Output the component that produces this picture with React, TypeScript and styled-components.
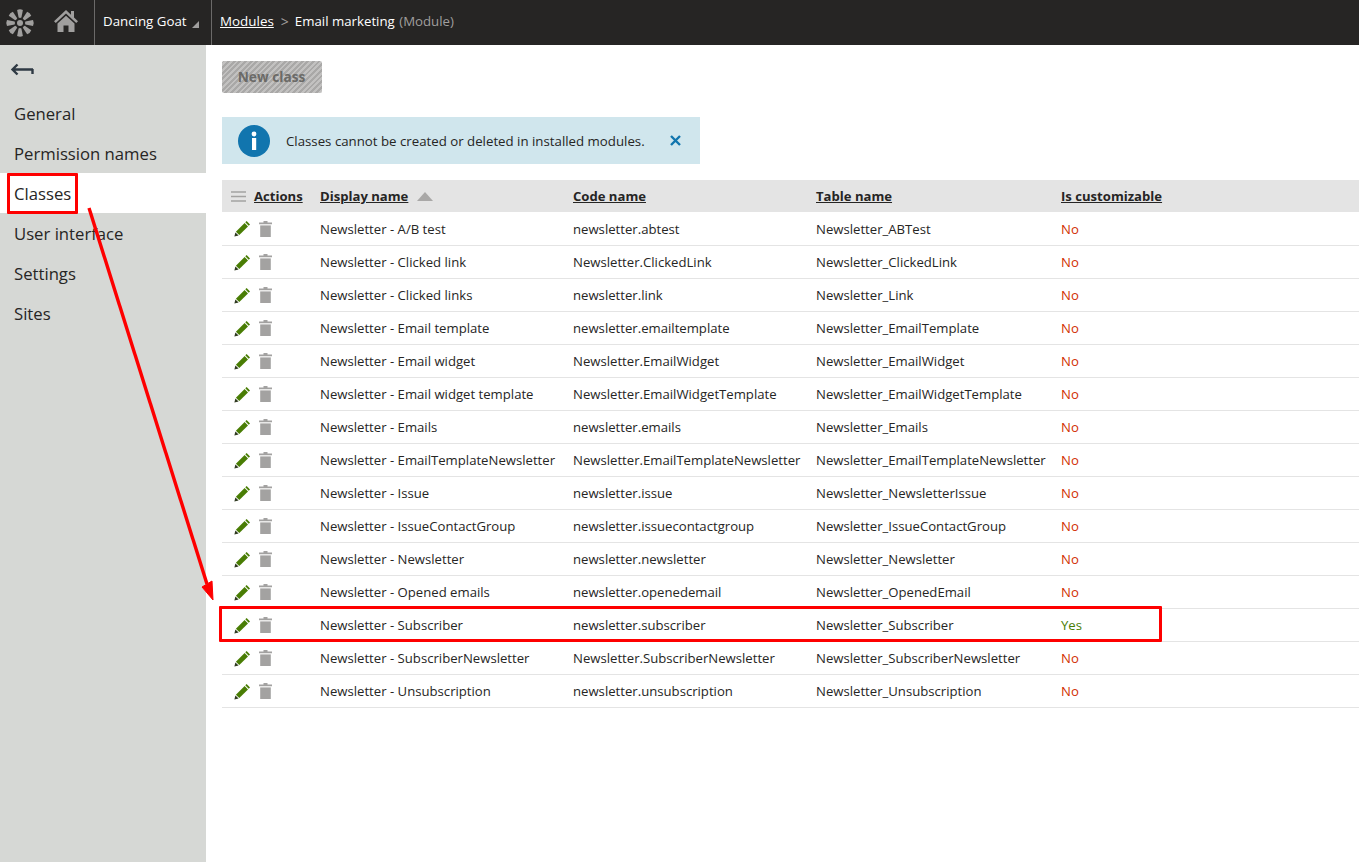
import React from "react";
import styled, { createGlobalStyle } from "styled-components";

const Global = createGlobalStyle`
  html, body { margin: 0; padding: 0; background: #fff; }
  body { font-family: "Open Sans", "Noto Sans", "Liberation Sans", sans-serif; color: #262524; overflow: hidden; }
`;
const Page = styled.div`position: relative; width: 1359px; height: 862px; overflow: hidden; display: flex; flex-direction: column;`;
const Header = styled.header`height: 45px; background: #262524; display: flex; align-items: stretch; flex: none; color: #fff;`;
const LogoCell = styled.div`width: 40px; display: flex; align-items: center; justify-content: center; padding-right: 1px; box-sizing: border-box;`;
const HomeCell = styled.div`width: 54px; display: flex; align-items: center; justify-content: center; padding-right: 3px; padding-bottom: 3px; box-sizing: border-box;`;
const SiteCell = styled.div`width: 118px; border-left: 1px solid #6b6a69; border-right: 1px solid #6b6a69; display: flex; align-items: center; padding: 0 0 3px 8px; box-sizing: border-box; font-size: 13.3px; gap: 5px;`;
const Caret = styled.span`width: 0; height: 0; border-style: solid; border-width: 0 0 7px 7px; border-color: transparent transparent #a09f9e transparent; margin-top: 7px;`;
const Crumbs = styled.div`display: flex; align-items: center; padding: 0 0 3px 8px; font-size: 13.4px; gap: 6px;`;
const CrumbLink = styled.a`color: #fff; text-decoration: underline;`;
const CrumbSep = styled.span`color: #a09f9e; font-size: 14px; margin-left: 1px;`;
const CrumbCurrent = styled.span`font-size: 13.25px;`;
const Muted = styled.span`color: #a09f9e; margin-left: 1px;`;
const Body = styled.div`flex: 1; display: flex; min-height: 0;`;
const Side = styled.nav`width: 206px; background: #d6d8d5; flex: none;`;
const Back = styled.div`height: 48px; padding: 15px 0 0 10px; box-sizing: border-box;`;
const MenuItem = styled.div<{ $active?: boolean }>`height: 40px; line-height: 42px; padding-left: 14px; font-size: 16.7px; color: #262524; background: ${(p) => (p.$active ? "#fff" : "transparent")};`;
const Main = styled.main`flex: 1; padding: 16px 0 0 16px; min-width: 0;`;
const DisabledButton = styled.div`width: 100px; height: 32px; border-radius: 2px; background: repeating-linear-gradient(135deg, #a9a8a7 0 2px, #c2c1c0 2px 4px); color: #6b6a67; font-size: 13.7px; font-weight: 700; display: flex; align-items: center; justify-content: center; box-sizing: border-box; padding: 0 1px 2px 0;`;
const Info = styled.div`margin-top: 24px; width: 478px; height: 47px; background: #d0e6ed; display: flex; align-items: center; padding-left: 16px; box-sizing: border-box; font-size: 13.25px; color: #262524;`;
const InfoText = styled.span`margin-left: 16px; width: 384px; white-space: nowrap; padding-top: 1px;`;
const Grid = styled.table`margin-top: 16px; width: 1137px; border-collapse: collapse; table-layout: fixed; font-size: 13.15px;`;
const HeadRow = styled.tr`background: #e4e4e4; height: 32px;`;
const Th = styled.th`text-align: left; padding: 0 0 0 8px; font-weight: 700; text-decoration: underline; font-size: 13.1px; white-space: nowrap; color: #262524;`;
const ActionsHead = styled.div`display: flex; align-items: center; gap: 8px; font-weight: 700; padding-left: 1px;`;
const SortArrow = styled.span`display: inline-block; width: 0; height: 0; border-style: solid; border-width: 0 8px 9px 8px; border-color: transparent transparent #a9a8a7 transparent; margin-left: 9px; vertical-align: 0;`;
const Row = styled.tr`height: 33px; border-bottom: 1px solid #e4e4e4;`;
const Td = styled.td`padding: 1px 0 0 8px; white-space: nowrap; box-sizing: border-box; color: #262524;`;
const Flag = styled.td<{ $yes: boolean }>`padding: 1px 0 0 8px; color: ${(p) => (p.$yes ? "#497d04" : "#d12f00")};`;
const Icons = styled.div`display: flex; align-items: center; gap: 8px; padding: 0 0 0 4px;`;
const Overlay = styled.div<{ $l: number; $t: number; $w: number; $h: number }>`position: absolute; left: ${(p) => p.$l}px; top: ${(p) => p.$t}px; width: ${(p) => p.$w}px; height: ${(p) => p.$h}px; border: 3px solid #fe0000; box-sizing: border-box; border-radius: 1px; pointer-events: none;`;
const Drawing = styled.svg`position: absolute; left: 0; top: 0; pointer-events: none;`;

const rows: [string, string, string, boolean?][] = [
  ["Newsletter - A/B test", "newsletter.abtest", "Newsletter_ABTest"],
  ["Newsletter - Clicked link", "Newsletter.ClickedLink", "Newsletter_ClickedLink"],
  ["Newsletter - Clicked links", "newsletter.link", "Newsletter_Link"],
  ["Newsletter - Email template", "newsletter.emailtemplate", "Newsletter_EmailTemplate"],
  ["Newsletter - Email widget", "Newsletter.EmailWidget", "Newsletter_EmailWidget"],
  ["Newsletter - Email widget template", "Newsletter.EmailWidgetTemplate", "Newsletter_EmailWidgetTemplate"],
  ["Newsletter - Emails", "newsletter.emails", "Newsletter_Emails"],
  ["Newsletter - EmailTemplateNewsletter", "Newsletter.EmailTemplateNewsletter", "Newsletter_EmailTemplateNewsletter"],
  ["Newsletter - Issue", "newsletter.issue", "Newsletter_NewsletterIssue"],
  ["Newsletter - IssueContactGroup", "newsletter.issuecontactgroup", "Newsletter_IssueContactGroup"],
  ["Newsletter - Newsletter", "newsletter.newsletter", "Newsletter_Newsletter"],
  ["Newsletter - Opened emails", "newsletter.openedemail", "Newsletter_OpenedEmail"],
  ["Newsletter - Subscriber", "newsletter.subscriber", "Newsletter_Subscriber", true],
  ["Newsletter - SubscriberNewsletter", "Newsletter.SubscriberNewsletter", "Newsletter_SubscriberNewsletter"],
  ["Newsletter - Unsubscription", "newsletter.unsubscription", "Newsletter_Unsubscription"],
];

const Logo = () => (
  <svg width="30" height="30" viewBox="0 0 30 30">
    <g fill="#a09f9e">
      <circle cx="15" cy="15" r="3" />
      {[0, 45, 90, 135, 180, 225, 270, 315].map((a) => (
        <path key={a} transform={`rotate(${a} 15 15)`} d="M13.6 9.6 L12.1 2 Q15 0.6 17.9 2 L16.4 9.6 Q15 10.4 13.6 9.6 Z" />
      ))}
    </g>
  </svg>
);
const Home = () => (
  <svg width="26" height="24" viewBox="0 0 26 24">
    <path fill="#a09f9e" d="M13 1 L1 12.2 L2.8 14 L13 4.6 L23.2 14 L25 12.2 L21 8.5 V2 H18 V5.7 Z" />
    <path fill="#a09f9e" d="M13 6.8 L4.5 14.6 V23 H10.5 V16.5 H15.5 V23 H21.5 V14.6 Z" />
  </svg>
);
const BackArrow = () => (
  <svg width="24" height="14" viewBox="0 0 24 14">
    <path fill="none" stroke="#2f3a44" strokeWidth="2.4" d="M23 6.5 H3 M7.5 1.5 L2.5 6.5 L7.5 11.5 M22.5 6 V11" />
  </svg>
);
const InfoIcon = () => (
  <svg width="32" height="32" viewBox="0 0 32 32">
    <circle cx="16" cy="16" r="16" fill="#1175ae" />
    <circle cx="16" cy="9" r="2.4" fill="#fff" />
    <rect x="14" y="13" width="4.2" height="12" fill="#fff" />
  </svg>
);
const CloseIcon = () => (
  <svg width="11" height="11" viewBox="0 0 11 11">
    <path d="M1 1 L10 10 M10 1 L1 10" stroke="#1175ae" strokeWidth="2.4" fill="none" />
  </svg>
);
const MenuIcon = () => (
  <svg width="15" height="11" viewBox="0 0 15 11">
    <path d="M0 1 H15 M0 5.5 H15 M0 10 H15" stroke="#a3a2a1" strokeWidth="1.6" />
  </svg>
);
const Pencil = () => (
  <svg width="17" height="17" viewBox="0 0 17 17">
    <path fill="#497d04" d="M12.6 1 L16 4.4 L14.7 5.7 L11.3 2.3 Z" />
    <path fill="#497d04" d="M10.6 3 L14 6.4 L5.3 15 L1.9 11.7 Z" />
    <path fill="#2f3a20" d="M1.4 12.4 L4.6 15.6 L0.4 16.6 Z" />
  </svg>
);
const Trash = () => (
  <svg width="13" height="16" viewBox="0 0 13 16">
    <path fill="#a3a2a1" d="M4.5 0 H8.5 V1.5 H13 V3.2 H0 V1.5 H4.5 Z" />
    <path fill="#a3a2a1" d="M1.2 4.4 H11.8 V16 H1.2 Z" />
  </svg>
);

export default function App() {
  return (
    <Page>
      <Global />
      <Header>
        <LogoCell><Logo /></LogoCell>
        <HomeCell><Home /></HomeCell>
        <SiteCell>Dancing Goat <Caret /></SiteCell>
        <Crumbs>
          <CrumbLink>Modules</CrumbLink>
          <CrumbSep>&gt;</CrumbSep>
          <CrumbCurrent>Email marketing <Muted>(Module)</Muted></CrumbCurrent>
        </Crumbs>
      </Header>
      <Body>
        <Side>
          <Back><BackArrow /></Back>
          <MenuItem>General</MenuItem>
          <MenuItem>Permission names</MenuItem>
          <MenuItem $active>Classes</MenuItem>
          <MenuItem>User interface</MenuItem>
          <MenuItem>Settings</MenuItem>
          <MenuItem>Sites</MenuItem>
        </Side>
        <Main>
          <DisabledButton>New class</DisabledButton>
          <Info>
            <InfoIcon />
            <InfoText>Classes cannot be created or deleted in installed modules.</InfoText>
            <CloseIcon />
          </Info>
          <Grid>
            <colgroup>
              <col width="90" />
              <col width="253" />
              <col width="243" />
              <col width="245" />
              <col />
            </colgroup>
            <thead>
              <HeadRow>
                <Th><ActionsHead><MenuIcon /><span>Actions</span></ActionsHead></Th>
                <Th>Display name<SortArrow /></Th>
                <Th>Code name</Th>
                <Th>Table name</Th>
                <Th>Is customizable</Th>
              </HeadRow>
            </thead>
            <tbody>
              {rows.map(([d, c, t, y]) => (
                <Row key={d}>
                  <Td><Icons><Pencil /><Trash /></Icons></Td>
                  <Td>{d}</Td>
                  <Td>{c}</Td>
                  <Td>{t}</Td>
                  <Flag $yes={!!y}>{y ? "Yes" : "No"}</Flag>
                </Row>
              ))}
            </tbody>
          </Grid>
        </Main>
      </Body>
      <Overlay $l={7} $t={173} $w={71} $h={41} />
      <Overlay $l={219} $t={606} $w={943} $h={36} />
      <Drawing width="1359" height="862" viewBox="0 0 1359 862">
        <path d="M89 208 L207 584" stroke="#fe0000" strokeWidth="3.4" fill="none" />
        <path d="M202 587 L212 581 L213 600 Z" fill="#fe0000" stroke="#fe0000" strokeWidth="1" />
      </Drawing>
    </Page>
  );
}
